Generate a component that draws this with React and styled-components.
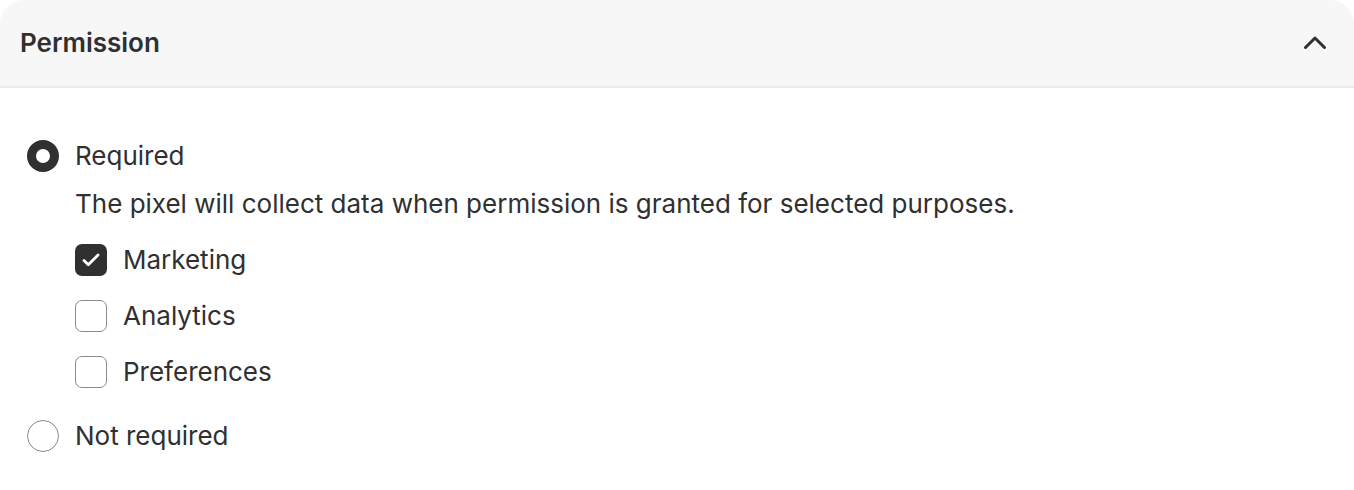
import React from 'react';
import styled, { createGlobalStyle } from 'styled-components';

const GlobalStyle = createGlobalStyle`
  body {
    margin: 0;
    background: #ffffff;
    font-family: Inter, "Noto Sans", sans-serif;
    color: #303030;
  }
`

const Card = styled.section`
  width: 100%;
  border-radius: 24px 24px 0 0;
  overflow: hidden;
  background: #ffffff;
`

const Header = styled.div`
  height: 86px;
  display: flex;
  align-items: center;
  justify-content: space-between;
  padding: 0 27px 0 20px;
  background: #f7f7f7;
  border-bottom: 2px solid #ebebeb;
`

const Title = styled.h2`
  margin: 0;
  font-size: 26px;
  font-weight: 600;
  line-height: 40px;
`

const Toggle = styled.button`
  display: flex;
  align-items: center;
  border: 0;
  padding: 0;
  background: transparent;
  color: #303030;
`

const Body = styled.div`
  padding: 48px 27px 40px;
  display: flex;
  flex-direction: column;
  gap: 24px;
`

const Option = styled.div`
  display: flex;
  flex-direction: column;
  gap: 8px;
`

const Row = styled.label`
  display: flex;
  align-items: center;
  gap: 16px;
  font-size: 26px;
  line-height: 40px;
`

const Radio = styled.span`
  width: 32px;
  height: 32px;
  box-sizing: border-box;
  border-radius: 50%;
  flex-shrink: 0;
  border: ${p => (p.$checked ? '9.5px solid #303030' : '1.5px solid #8a8a8a')};
  background: #ffffff;
`

const Details = styled.div`
  padding-left: 48px;
  display: flex;
  flex-direction: column;
  gap: 16px;
`

const Help = styled.p`
  margin: 0;
  font-size: 26px;
  line-height: 40px;
`

const Purposes = styled.div`
  display: flex;
  flex-direction: column;
  gap: 16px;
`

const Box = styled.span`
  width: 32px;
  height: 32px;
  box-sizing: border-box;
  border-radius: 7px;
  flex-shrink: 0;
  display: flex;
  align-items: center;
  justify-content: center;
  background: ${p => (p.$checked ? '#303030' : '#ffffff')};
  border: ${p => (p.$checked ? 'none' : '1.5px solid #8a8a8a')};
`

const purposes = [
  { label: 'Marketing', checked: true },
  { label: 'Analytics', checked: false },
  { label: 'Preferences', checked: false },
]

function Check() {
  return (
    <svg width="20" height="20" viewBox="0 0 20 20" fill="none">
      <path d="M3 10.5l4.3 4.3L17 5" stroke="#fff" strokeWidth="2.8" strokeLinecap="round" strokeLinejoin="round" />
    </svg>
  )
}

export default function App() {
  return (
    <>
      <GlobalStyle />
      <Card>
        <Header>
          <Title>Permission</Title>
          <Toggle aria-label="Collapse">
            <svg width="24" height="14" viewBox="0 0 24 14" fill="none">
              <path d="M2.5 11.5l9.5-9.5 9.5 9.5" stroke="#303030" strokeWidth="3" strokeLinecap="round" strokeLinejoin="round" />
            </svg>
          </Toggle>
        </Header>
        <Body>
          <Option>
            <Row>
              <Radio $checked />
              Required
            </Row>
            <Details>
              <Help>The pixel will collect data when permission is granted for selected purposes.</Help>
              <Purposes>
                {purposes.map(p => (
                  <Row key={p.label}>
                    <Box $checked={p.checked}>{p.checked && <Check />}</Box>
                    {p.label}
                  </Row>
                ))}
              </Purposes>
            </Details>
          </Option>
          <Row>
            <Radio />
            Not required
          </Row>
        </Body>
      </Card>
    </>
  )
}
